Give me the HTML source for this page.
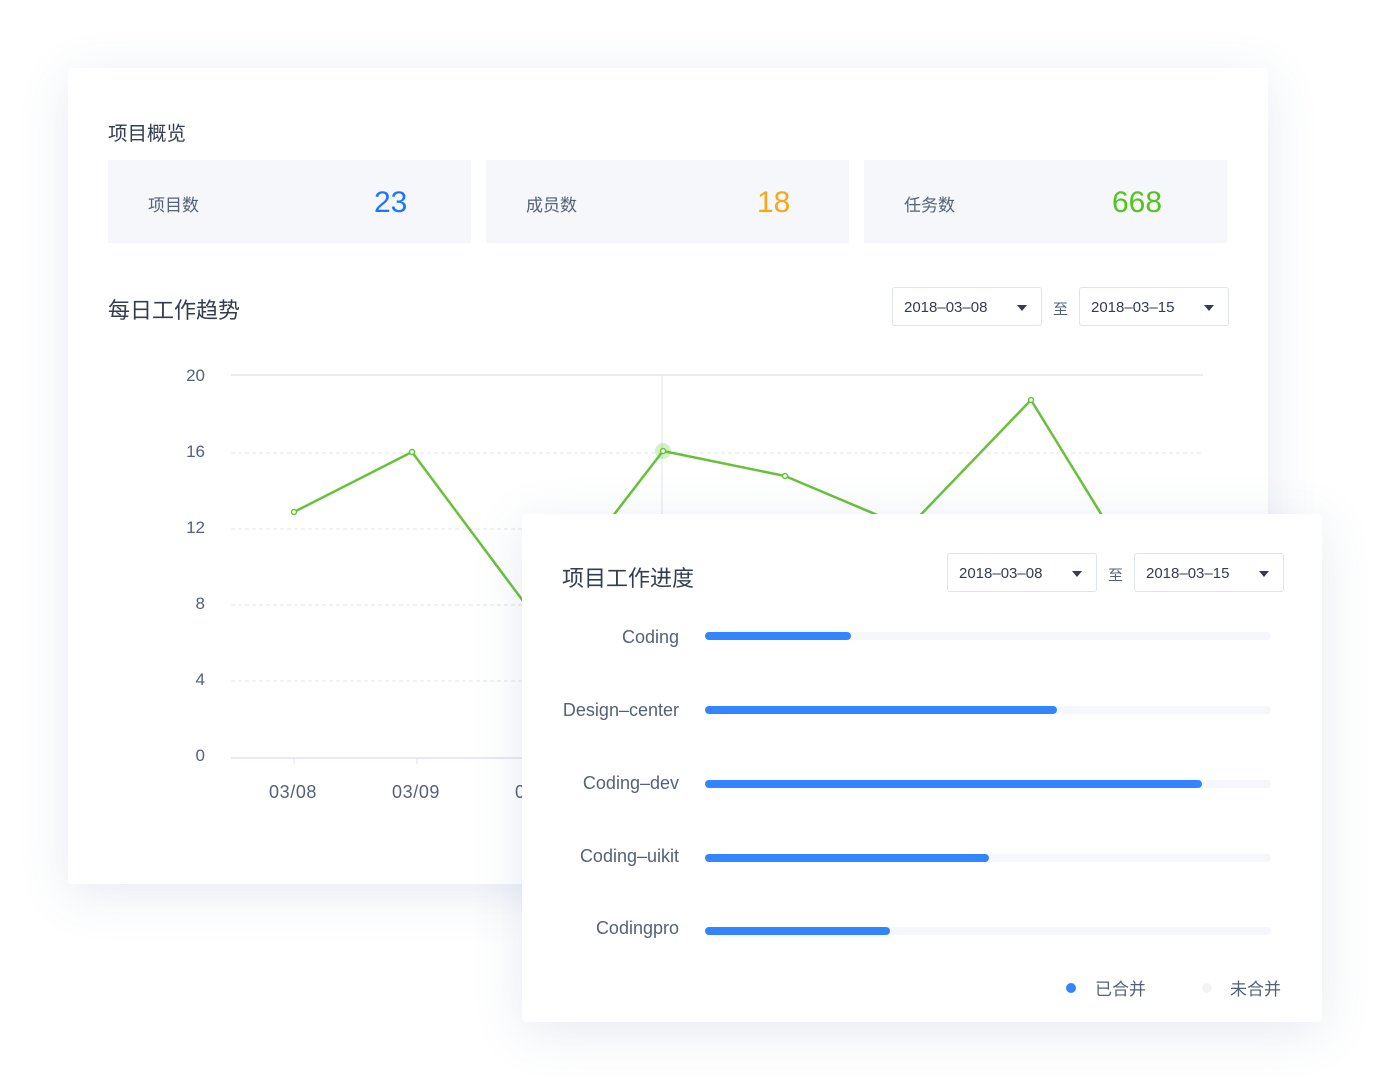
<!DOCTYPE html>
<html><head><meta charset="utf-8"><style>
*{margin:0;padding:0;box-sizing:border-box}
body{width:1390px;height:1090px;background:#fff;position:relative;overflow:hidden;font-family:"Liberation Sans","Noto Sans CJK SC",sans-serif;color:#333d4f}
.card{position:absolute;background:#fff;border-radius:4px;box-shadow:0 10px 50px rgba(60,90,150,0.13)}
.t{position:absolute;white-space:nowrap}
.stat{position:absolute;top:160px;width:363px;height:83px;background:#f5f7fa}
.stat .l{position:absolute;left:40px;top:31px;font-size:17px;color:#556176}
.stat .n{position:absolute;top:26px;font-size:30px}
.sel{position:absolute;width:150px;height:39px;border:1px solid #dfe3ea;border-radius:3px;background:#fff;font-size:15px;color:#333d4f}
.sel span{position:absolute;left:11px;top:11px}
.sel i{position:absolute;right:14px;top:17px;border-left:5px solid transparent;border-right:5px solid transparent;border-top:6px solid #333d4f}
.zhi{position:absolute;font-size:15px;color:#556176}
.bl{position:absolute;font-size:18px;color:#556176;right:0;text-align:right;width:160px}
.track{position:absolute;left:705px;width:566px;height:8px;border-radius:4px;background:#f5f7fa}
.fill{position:absolute;left:0;top:0;height:8px;border-radius:4px;background:#3385ff}
.yl{position:absolute;font-size:17px;color:#556176;text-align:right;width:40px;left:165px}
.xl{position:absolute;font-size:18px;color:#556176;letter-spacing:0.6px}
</style></head><body>
<div class="card" style="left:68px;top:68px;width:1200px;height:816px"></div>
<div class="t" style="left:108px;top:117px;font-size:19.5px;color:#333d4f">项目概览</div>
<div class="stat" style="left:108px"><div class="l">项目数</div><div class="n" style="left:266px;color:#1a75ff">23</div></div>
<div class="stat" style="left:486px"><div class="l">成员数</div><div class="n" style="left:271px;color:#faa619">18</div></div>
<div class="stat" style="left:864px"><div class="l">任务数</div><div class="n" style="left:248px;color:#52c41a">668</div></div>
<div class="t" style="left:108px;top:293px;font-size:22px">每日工作趋势</div>
<div class="sel" style="left:892px;top:287px"><span>2018–03–08</span><i></i></div>
<div class="zhi" style="left:1053px;top:298px">至</div>
<div class="sel" style="left:1079px;top:287px"><span>2018–03–15</span><i></i></div>
<svg style="position:absolute;left:0;top:0" width="1390" height="1090">
<line x1="231" y1="375" x2="1203" y2="375" stroke="#e3e6ec" stroke-width="1.5"/>
<g stroke="#e1e4ea" stroke-dasharray="4 3" stroke-width="1">
<line x1="231" y1="453" x2="1203" y2="453"/><line x1="231" y1="529" x2="1203" y2="529"/>
<line x1="231" y1="605" x2="1203" y2="605"/><line x1="231" y1="681" x2="1203" y2="681"/></g>
<line x1="231" y1="758" x2="1203" y2="758" stroke="#dfe3ea" stroke-width="1.5"/>
<line x1="294" y1="758" x2="294" y2="764" stroke="#dfe3ea"/><line x1="417" y1="758" x2="417" y2="764" stroke="#dfe3ea"/>
<line x1="662" y1="375" x2="662" y2="758" stroke="#dfe3ea"/>
<circle cx="663" cy="451" r="8" fill="#52c41a" opacity="0.25"/>
<polyline points="294,512 412,452 535,617 663,451 785,476 908,528 1031,400 1154,600" fill="none" stroke="#67c23a" stroke-width="2.5" stroke-linejoin="round"/>
<g fill="#fff" stroke="#67c23a" stroke-width="1.5"><circle cx="294" cy="512" r="2.5"/><circle cx="412" cy="452" r="2.5"/><circle cx="663" cy="451" r="2.5"/><circle cx="785" cy="476" r="2.5"/><circle cx="1031" cy="400" r="2.5"/></g>
</svg>
<div class="yl" style="top:366px">20</div><div class="yl" style="top:442px">16</div><div class="yl" style="top:518px">12</div>
<div class="yl" style="top:594px">8</div><div class="yl" style="top:670px">4</div><div class="yl" style="top:746px">0</div>
<div class="xl" style="left:269px;top:782px">03/08</div><div class="xl" style="left:392px;top:782px">03/09</div><div class="xl" style="left:515px;top:782px">0</div>

<div class="card" style="left:522px;top:514px;width:800px;height:508px"></div>
<div class="t" style="left:562px;top:561px;font-size:22px">项目工作进度</div>
<div class="sel" style="left:947px;top:553px"><span>2018–03–08</span><i></i></div>
<div class="zhi" style="left:1108px;top:564px">至</div>
<div class="sel" style="left:1134px;top:553px"><span>2018–03–15</span><i></i></div>
<div style="position:absolute;left:519px;top:0;width:160px;height:1px">
<div class="bl" style="top:627px">Coding</div>
<div class="bl" style="top:700px">Design–center</div>
<div class="bl" style="top:773px">Coding–dev</div>
<div class="bl" style="top:846px">Coding–uikit</div>
<div class="bl" style="top:918px">Codingpro</div>
</div>
<div class="track" style="top:632px"><div class="fill" style="width:146px"></div></div>
<div class="track" style="top:706px"><div class="fill" style="width:352px"></div></div>
<div class="track" style="top:780px"><div class="fill" style="width:497px"></div></div>
<div class="track" style="top:854px"><div class="fill" style="width:284px"></div></div>
<div class="track" style="top:927px"><div class="fill" style="width:185px"></div></div>
<div style="position:absolute;left:1066px;top:983px;width:10px;height:10px;border-radius:50%;background:#3385ff"></div>
<div class="t" style="left:1095px;top:975px;font-size:17px;color:#556176">已合并</div>
<div style="position:absolute;left:1202px;top:983px;width:10px;height:10px;border-radius:50%;background:#f2f4f8"></div>
<div class="t" style="left:1230px;top:975px;font-size:17px;color:#556176">未合并</div>
</body></html>
